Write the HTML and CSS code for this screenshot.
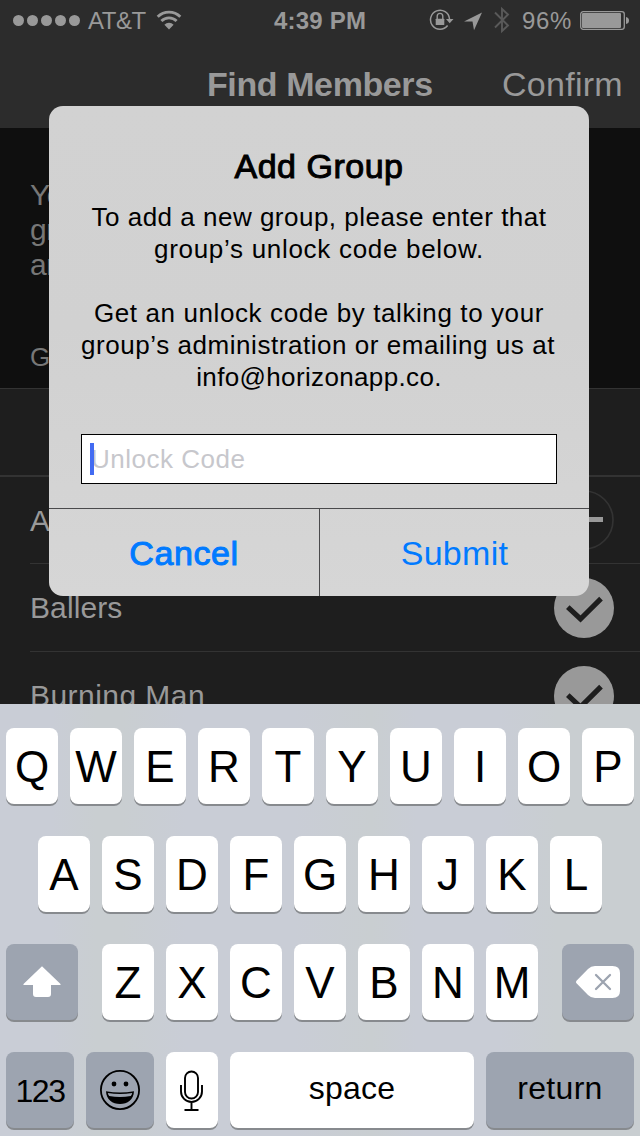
FILE: index.html
```html
<!DOCTYPE html>
<html lang="en">
<head>
<meta charset="utf-8">
<title>Find Members</title>
<link rel="stylesheet" href="styles.css">
</head>
<body>
<div class="phone">
  <div class="app">
    <header class="header">
      <div class="status">
        <svg class="dots" width="68" height="12" viewBox="0 0 68 12"><circle cx="5.500" cy="6.500" r="5.500"/><circle cx="19.500" cy="6.500" r="5.500"/><circle cx="33.500" cy="6.500" r="5.500"/><circle cx="47.500" cy="6.500" r="5.500"/><circle cx="61.500" cy="6.500" r="5.500"/></svg>
        <span class="carrier">AT&amp;T</span>
        <svg class="wifi" width="26" height="20" viewBox="0 0 26 20"><path d="M1.700 6.800a16 16 0 0 1 22.600 0M5.400 11a10.800 10.800 0 0 1 15.200 0" fill="none" stroke="#999" stroke-width="2.900"/><path d="M13 19.500l-4.600-4.800a6.500 6.500 0 0 1 9.200 0z"/></svg>
        <span class="time">4:39 PM</span>
        <svg class="lock" width="26" height="22" viewBox="0 0 26 22"><path d="M18.600 16.500A9.500 9.500 0 1 1 20.500 10" fill="none" stroke="#999" stroke-width="1.500"/><path d="M17 10h7.500l-3.800 4.300z"/><path d="M8.200 10V7.200a2.800 2.800 0 0 1 5.600 0V10" fill="none" stroke="#999" stroke-width="1.400"/><rect x="6.700" y="9.700" width="8.600" height="6.300" rx=".6"/></svg>
        <svg class="arrow" width="20" height="20" viewBox="0 0 20 20"><path d="M19 1.500L1 10.600h8.500l1.500 8.700z"/></svg>
        <svg class="bluetooth" width="16" height="28" viewBox="0 0 16 28"><path d="M1 6.500l13 13L8 25V3l6 5.500-13 13" fill="none" stroke="#595959" stroke-width="1.900"/></svg>
        <span class="percent">96%</span>
        <svg class="battery" width="50" height="20" viewBox="0 0 50 20"><rect x=".7" y=".7" width="43.600" height="17.600" rx="2.500" fill="none" stroke="#999" stroke-width="1.300"/><rect x="2" y="2" width="39" height="15" rx="1"/><path d="M46 6q3 .5 3 3.500t-3 3.500z"/></svg>
      </div>
      <div class="nav"><span class="nav-title">Find Members</span><span class="confirm">Confirm</span></div>
    </header>
    <section class="intro"><p class="blurb">Yo<br>gr<br>an</p><p class="label">G</p></section>
    <section class="list">
      <div class="search"></div>
      <div class="row"><span>A</span><svg width="60" height="60" viewBox="0 0 60 60"><circle cx="30" cy="30" r="29" fill="none" stroke="#333" stroke-width="1.700"/><path d="M11 29.500h38" stroke="#999" stroke-width="5"/></svg></div>
      <div class="row"><span>Ballers</span><svg width="60" height="60" viewBox="0 0 60 60"><circle cx="30" cy="30" r="30" fill="#999"/><path d="M13.800 29.200L26.500 41 47 20.700" fill="none" stroke="#1e1e1e" stroke-width="5.200"/></svg></div>
      <div class="row"><span class="burning">Burning Man</span><svg width="60" height="60" viewBox="0 0 60 60"><circle cx="30" cy="30" r="30" fill="#999"/><path d="M13.800 29.200L26.500 41 47 20.700" fill="none" stroke="#1e1e1e" stroke-width="5.200"/></svg></div>
    </section>
  </div>

  <div class="alert">
    <h1 class="alert-title">Add Group</h1>
    <p class="message"><span class="l1">To add a new group, please enter that</span><br><span class="l2">group’s unlock code below.</span><br><br><span class="l3">Get an unlock code by talking to your</span><br><span class="l4">group’s administration or emailing us at</span><br><span class="l5">info@horizonapp.co.</span></p>
    <div class="field"><i class="caret"></i><span>Unlock Code</span></div>
    <div class="actions"><div class="cancel">Cancel</div><div class="submit">Submit</div></div>
  </div>

  <div class="keyboard">
    <div class="keys"><b>Q</b><b>W</b><b>E</b><b>R</b><b>T</b><b>Y</b><b>U</b><b>I</b><b>O</b><b>P</b></div>
    <div class="keys"><b>A</b><b>S</b><b>D</b><b>F</b><b>G</b><b>H</b><b>J</b><b>K</b><b>L</b></div>
    <div class="keys">
      <b class="dark shift"><svg width="40" height="34" viewBox="0 0 40 34"><path d="M20 1.200L38.500 19q.6 1-.5 1H29v9q0 3-3 3H14q-3 0-3-3v-9H2q-1.100 0-.5-1z" fill="#fff"/></svg></b>
      <b>Z</b><b>X</b><b>C</b><b>V</b><b>B</b><b>N</b><b>M</b>
      <b class="dark delete"><svg width="44" height="32" viewBox="0 0 44 32"><path d="M.5 14.700L12 3q3-3 7-3h17.500Q44 0 44 7v18q0 7-7.500 7H19q-4 0-7-3L.5 17.300q-1-1.300 0-2.600z" fill="#fff"/><path d="M20 9l14 14M34 9L20 23" stroke="#9da4b0" stroke-width="2.300" stroke-linecap="round"/></svg></b>
    </div>
    <div class="keys">
      <b class="dark w68 num">123</b>
      <b class="dark w68"><svg width="40" height="40" viewBox="0 0 40 40"><circle cx="20" cy="20" r="19.100" fill="none" stroke="#000" stroke-width="1.800"/><circle cx="14" cy="14" r="2.400"/><circle cx="26" cy="14" r="2.400"/><path d="M6 21.200q14 2.600 28 0C33.700 29.500 27.500 34 20 34S6.300 29.500 6 21.200z"/><path d="M7.800 22.900q12.200 2.100 24.400 0-.4 2.100-1.400 3.100-10.800 2-21.600 0-1-1-1.400-3.100z" fill="#9da4b0"/></svg></b>
      <b><svg class="mic" width="24" height="42" viewBox="0 0 24 42"><g fill="none" stroke="#000" stroke-width="1.900"><rect x="5" y="1.500" width="13" height="27" rx="6.500"/><path d="M1 15v6.500a10.500 10.500 0 0 0 21 0V15M11.500 32v8M4.500 40h14"/></g></svg></b>
      <b class="space">space</b>
      <b class="dark return">return</b>
    </div>
  </div>
</div>
</body>
</html>
```
FILE: styles.css
```css
* { box-sizing: border-box; }
body { margin: 0; font-family: "Liberation Sans", Arial, sans-serif; }
p, h1 { margin: 0; }
svg { display: block; flex: none; }

.phone { position: relative; width: 640px; height: 1136px; overflow: hidden; }
.app { height: 704px; overflow: hidden; background: #1e1e1e; color: #999; }

.header { height: 128px; background: #2c2c2c; }
.status { display: flex; align-items: center; height: 40px; padding-left: 13px; font-size: 24px; line-height: 40px; white-space: nowrap; fill: #999; }
.status span { padding-top: 1px; }
.carrier { width: 61px; margin-left: 7px; letter-spacing: -.5px; }
.wifi { margin-left: 7px; }
.time { width: 92px; margin-left: 92px; font-weight: bold; letter-spacing: .2px; }
.lock { margin-left: 63px; }
.arrow { margin-left: 8px; margin-top: 1px; }
.bluetooth { margin-left: 11px; }
.percent { width: 51px; margin-left: 12px; letter-spacing: .6px; }
.battery { margin-left: 7px; margin-top: 1px; }

.nav { display: flex; justify-content: space-between; height: 88px; padding: 23px 17px 0 207px; font-size: 34px; line-height: 42px; white-space: nowrap; }
.nav-title { font-weight: bold; letter-spacing: -.4px; }
.confirm { letter-spacing: .3px; }

.intro { height: 261px; padding: 49px 30px 0; background: #0f0f0f; border-bottom: 1px solid #333; color: #777; }
.blurb { font-size: 30px; line-height: 35px; letter-spacing: -.5px; }
.label { margin-top: 60px; font-size: 26px; line-height: 30px; }
.search { height: 88px; border-bottom: 2px solid #333; }
.row { display: flex; justify-content: space-between; align-items: center; height: 88px; margin-left: 30px; padding-right: 26px; border-bottom: 1px solid #333; font-size: 30px; letter-spacing: .1px; }
.row span { padding-top: 1px; }
.row .burning { letter-spacing: .45px; }
.row:nth-child(2) { height: 87px; }

.alert { position: absolute; left: 49px; top: 106px; width: 540px; height: 490px; border-radius: 14px; overflow: hidden; padding-top: 40px; background: linear-gradient(#d2d2d2, #d1d1d1 45%, #d6d6d6); color: #000; text-align: center; }
.alert-title { font-size: 34px; line-height: 40px; font-weight: normal; letter-spacing: .5px; -webkit-text-stroke: 1px #000; }
.message { margin-top: 15px; font-size: 26px; line-height: 32px; letter-spacing: .5px; white-space: nowrap; }
.l2 { letter-spacing: .7px; }
.l3 { letter-spacing: .6px; }
.l4 { letter-spacing: .55px; margin-right: 2px; }
.l5 { letter-spacing: .35px; }
.field { display: flex; align-items: center; width: 476px; height: 50px; margin: 41px 32px 24px; padding-left: 8px; border: 1px solid #000; background: #fff; color: #c7c7cc; font-size: 26px; letter-spacing: .5px; }
.field span { margin-left: -3px; }
.caret { width: 4px; height: 32px; background: #426bf2; z-index: 1; }
.actions { display: flex; height: 88px; border-top: 1px solid #4a4a4c; color: #007aff; font-size: 34px; line-height: 89px; }
.cancel { width: 271px; border-right: 1px solid #4a4a4c; letter-spacing: .6px; -webkit-text-stroke: 1px #007aff; }
.submit { width: 269px; letter-spacing: .3px; }

.keyboard { display: flex; flex-direction: column; gap: 32px; height: 432px; padding-top: 24px; background: linear-gradient(90deg, #c9cdd6 0 8%, #c9ced1 15% 19%, #c9cdd6 29% 46%, #c9ced1 58%, #c9cdd6 65% 78%, #c9ced1 87%); }
.keys { display: flex; justify-content: center; gap: 12px; height: 76px; }
.keys b { display: flex; align-items: center; justify-content: center; flex: none; width: 52px; height: 76px; padding-top: 2px; border-radius: 8px; background: #fff; box-shadow: 0 2px 0 #878a8e; color: #000; font-size: 44px; line-height: 74px; font-weight: normal; }
.keys .dark { padding-top: 0; background: #9da4b0; }
.mic { margin-left: -1px; }
.keys .shift { width: 72px; margin-right: 12px; }
.keys .delete { width: 72px; margin-left: 12px; }
.keys .w68 { width: 68px; }
.keys .num { font-size: 32px; letter-spacing: -1.4px; padding-top: 1px; }
.keys .space { width: 244px; font-size: 32px; letter-spacing: .2px; padding: 0 0 5px; }
.keys .return { width: 148px; font-size: 32px; letter-spacing: .3px; padding: 0 0 5px; }
```
